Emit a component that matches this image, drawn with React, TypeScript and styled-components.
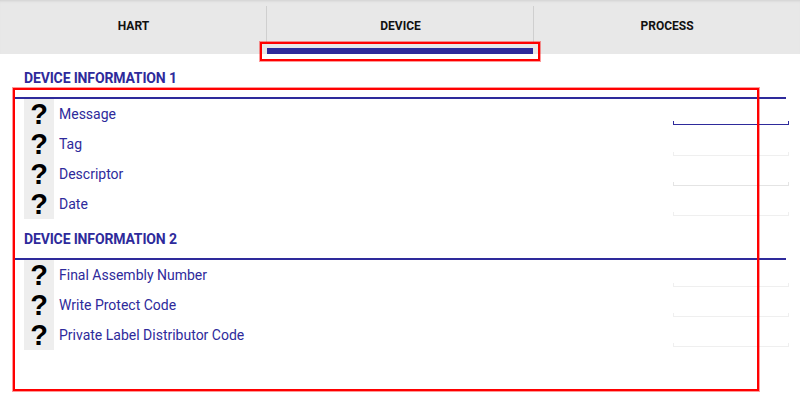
import React from "react";
import styled, { createGlobalStyle } from "styled-components";

const Global = createGlobalStyle`
  html, body { margin: 0; padding: 0; background: #fff; }
  body { font-family: Roboto, "Liberation Sans", sans-serif; }
`;
const Page = styled.div`
  position: relative;
  width: 800px;
  height: 419px;
  overflow: hidden;
  background: #fff;
`;
const TabBar = styled.div`
  display: grid;
  grid-template-columns: 267px 267px 266px;
  height: 54px;
  background: #e8e8e8;
  box-shadow: inset 0 3px 3px -2px #cfcfcf;
`;
const Tab = styled.div<{ $divider?: boolean }>`
  position: relative;
  display: flex;
  align-items: flex-start;
  justify-content: center;
  padding-top: 19px;
  font-size: 12px;
  line-height: 14px;
  font-weight: 700;
  color: #111;
  &::after {
    content: "";
    display: ${(p) => (p.$divider ? "block" : "none")};
    position: absolute;
    right: 0;
    top: 6px;
    height: 36px;
    width: 1px;
    background: #cfcfcf;
  }
`;
const Indicator = styled.div`
  position: absolute;
  left: 0;
  right: 1px;
  top: 48px;
  height: 6px;
  background: #2e2a9b;
`;
const Content = styled.div`
  padding: 0 14px 0 15px;
`;
const SectionTitle = styled.div<{ $top: number; $height: number; $pad: number }>`
  margin-top: ${(p) => p.$top}px;
  padding-left: 9px;
  height: ${(p) => p.$height}px;
  box-sizing: border-box;
  padding-top: ${(p) => p.$pad}px;
  font-size: 14px;
  line-height: 18px;
  letter-spacing: -0.15px;
  font-weight: 700;
  color: #2e2a9b;
  border-bottom: 2px solid #2e2a9b;
`;
const Row = styled.div`
  display: flex;
  align-items: stretch;
  height: 30px;
  padding-left: 9px;
`;
const Help = styled.div`
  width: 30px;
  background: #eeeeee;
  display: flex;
  align-items: center;
  justify-content: center;
  font-family: "Liberation Sans", sans-serif;
  font-size: 29px;
  font-weight: 700;
  line-height: 30px;
  color: #000;
`;
const Label = styled.div`
  flex: 1;
  padding-left: 5px;
  font-size: 14px;
  line-height: 31px;
  color: #2e2a9b;
`;
const Field = styled.div<{ $state: "focus" | "mid" | "idle"; $drop: number }>`
  align-self: flex-start;
  box-sizing: border-box;
  width: 116px;
  margin-top: ${(p) => p.$drop}px;
  margin-right: -3px;
  height: 4px;
  border: 1px solid
    ${(p) =>
      p.$state === "focus" ? "#2e2a9b" : p.$state === "mid" ? "#e4e4e4" : "#efefef"};
  border-top: none;
`;
const Annotation = styled.div<{ $l: number; $t: number; $w: number; $h: number }>`
  position: absolute;
  left: ${(p) => p.$l}px;
  top: ${(p) => p.$t}px;
  width: ${(p) => p.$w}px;
  height: ${(p) => p.$h}px;
  box-sizing: border-box;
  border: 2px solid #ff0000;
  box-shadow: 0 0 0 1px rgba(255, 0, 0, 0.4);
  pointer-events: none;
`;

type F = { name: string; state: "focus" | "mid" | "idle"; drop: number };
const one: F[] = [
  { name: "Message", state: "focus", drop: 22 },
  { name: "Tag", state: "idle", drop: 23 },
  { name: "Descriptor", state: "mid", drop: 23 },
  { name: "Date", state: "idle", drop: 23 },
];
const two: F[] = [
  { name: "Final Assembly Number", state: "idle", drop: 23 },
  { name: "Write Protect Code", state: "idle", drop: 23 },
  { name: "Private Label Distributor Code", state: "idle", drop: 23 },
];

const Rows = ({ items }: { items: F[] }) => (
  <>
    {items.map((f) => (
      <Row key={f.name}>
        <Help>?</Help>
        <Label>{f.name}</Label>
        <Field $state={f.state} $drop={f.drop} />
      </Row>
    ))}
  </>
);

export default function App() {
  return (
    <Page>
      <Global />
      <TabBar>
        <Tab $divider>HART</Tab>
        <Tab $divider>
          DEVICE
          <Indicator />
        </Tab>
        <Tab>PROCESS</Tab>
      </TabBar>
      <Content>
        <SectionTitle $top={2} $height={43} $pad={13}>DEVICE INFORMATION 1</SectionTitle>
        <Rows items={one} />
        <SectionTitle $top={0} $height={41} $pad={11}>DEVICE INFORMATION 2</SectionTitle>
        <Rows items={two} />
      </Content>
      <Annotation $l={260} $t={42} $w={280} $h={19} />
      <Annotation $l={13} $t={88} $w={746} $h={303} />
    </Page>
  );
}
